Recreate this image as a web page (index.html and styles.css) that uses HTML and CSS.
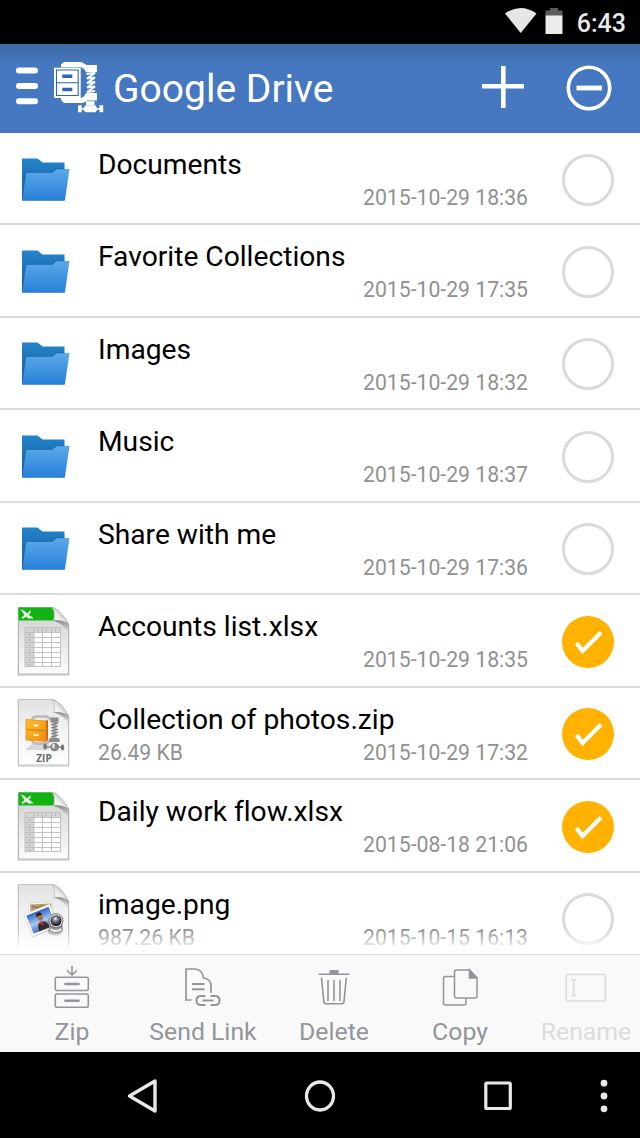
FILE: index.html
```
<!DOCTYPE html>
<html lang="en">

<head>
  <meta charset="UTF-8" />
  <meta name="viewport" content="width=device-width, initial-scale=1.0" />
  <title>Google Drive</title>
  <link rel="stylesheet" href="styles.css">
</head>

<body>
  <!-- File type icons -->
  <svg class="sprite" width="0" height="0">
    <defs>
      <linearGradient id="folderBack" x1="0" y1="0" x2="0" y2="1">
        <stop offset="0" stop-color="#2484ca" />
        <stop offset="1" stop-color="#155a9e" />
      </linearGradient>
      <linearGradient id="folderFront" x1="0" y1="0" x2="0" y2="1">
        <stop offset="0" stop-color="#5ca9e9" />
        <stop offset="1" stop-color="#2780d8" />
      </linearGradient>
      <linearGradient id="paper" x1="0" y1="0" x2="0" y2="1">
        <stop offset="0" stop-color="#e2e2e2" />
        <stop offset="0.5" stop-color="#f4f4f4" />
        <stop offset="1" stop-color="#fdfdfd" />
      </linearGradient>
      <linearGradient id="sheetPaper" x1="0" y1="0" x2="0" y2="1">
        <stop offset="0" stop-color="#cfcfcf" />
        <stop offset="0.5" stop-color="#e6e6e6" />
        <stop offset="1" stop-color="#fcfcfc" />
      </linearGradient>
      <linearGradient id="fold" x1="0" y1="1" x2="0.7" y2="0.3">
        <stop offset="0" stop-color="#ffffff" />
        <stop offset="0.6" stop-color="#f0f0f0" />
        <stop offset="1" stop-color="#bdbdbd" />
      </linearGradient>
      <linearGradient id="foldShade" x1="0" y1="0" x2="0" y2="1">
        <stop offset="0" stop-color="#777" stop-opacity="0.8" />
        <stop offset="1" stop-color="#999" stop-opacity="0" />
      </linearGradient>
      <linearGradient id="cabinet" x1="0" y1="0" x2="1" y2="1">
        <stop offset="0" stop-color="#fdc02c" />
        <stop offset="1" stop-color="#f28a12" />
      </linearGradient>
      <linearGradient id="sky" x1="0" y1="0" x2="0" y2="1">
        <stop offset="0" stop-color="#2e62c4" />
        <stop offset="0.55" stop-color="#a9c9f2" />
        <stop offset="1" stop-color="#3a6bc0" />
      </linearGradient>
      <radialGradient id="lens" cx="0.45" cy="0.35" r="0.6">
        <stop offset="0" stop-color="#ffffff" />
        <stop offset="0.3" stop-color="#8a8c9a" />
        <stop offset="1" stop-color="#15161e" />
      </radialGradient>
    </defs>

    <symbol id="folder" viewBox="0 0 56 72">
      <path d="M6 15.500h15.500l5 4H48.500v38H6z" fill="url(#folderBack)" />
      <path d="M10.500 29.500h26l4-3.500H53.500l-4.600 31.500H6z" fill="url(#folderFront)" />
      <path d="M10.300 29.300h26l4-3.500H48.500" fill="none" stroke="#1565a8" stroke-width="0.7" />
    </symbol>

    <symbol id="xlsx" viewBox="1 0 56 72">
      <path d="M2.500 3h37.500l14.500 16.500v51.500H2.500z" fill="#999" opacity="0.35" />
      <path d="M3.500 2.500h35q8 4 15 16.500v50h-50z" fill="url(#sheetPaper)" stroke="#b5b5b5" />
      <path d="M3.500 2.500h34q3 3 1 13h-35z" fill="#12b312" />
      <path d="M5.500 4.500l3.500 1 3 3 3.500-3.500v3l-2 1.500 4.500 3v1h-5l-1.500-2-4 2.500-1-1.500 3-2.500z" fill="#e9f9e9" />
      <path d="M37 2.500q3.500 3.500 2 13 9-1 14 4-6-14-16-17z" fill="url(#fold)" stroke="#bbb" stroke-width="0.5" />
      <path d="M38 15.500q9-1 15.500 3.500v9q-5-9-15.500-12.500z" fill="url(#foldShade)" />
      <path d="M19 27h26v34H19z" fill="#fff" />
      <path d="M10 22.500h35.500V27H19v34.500h-9z" fill="#d4d4d4" />
      <path d="M10 22.500h35.500v39H10zM19 22.500v39M27.500 22.500v39M36.500 22.500v39M10 27.500h35.500M10 32.500h35.500M10 37.500h35.500M10 42.500h35.500M10 47.500h35.500M10 52.500h35.500M10 57.500h35.500" fill="none" stroke="#bcbcbc" stroke-width="0.9" />
      <path d="M13 30h3M13 35h3M13 40h3M13 45h3M13 50h3M13 55h3M13 60h3M23 24v2M31.500 24v2M40.500 24v2" stroke="#a8a8a8" stroke-width="0.8" />
    </symbol>

    <symbol id="page" viewBox="0 0 56 72">
      <path d="M2.500 2.500h37l15 17V70h-52z" fill="#999" opacity="0.3" />
      <path d="M3.500 2.500h35q8 4 15 16.500v49h-50z" fill="url(#paper)" stroke="#c2c2c2" />
      <path d="M37 2.500q3.500 3.500 2 13 9-1 14.500 4-6-14-16.500-17z" fill="url(#fold)" stroke="#b0b0b0" stroke-width="0.7" />
      <path d="M39 15.500q9-1 14.500 3.500v8q-5-9-14.500-11.500z" fill="url(#foldShade)" />
    </symbol>

    <symbol id="image" viewBox="1 0 56 72">
      <use href="#page" width="56" height="72" />
      <path d="M13 21l24-1 2 16-24 5z" fill="#f8f8f8" stroke="#d0d0d0" stroke-width="0.600" />
      <path d="M15 22.500l21-1 1 8-21 4z" fill="#b5a06a" />
      <path d="M17 24l5 2 4-2.500 6 2 4-2" fill="none" stroke="#7d6c3c" stroke-width="1" />
      <g transform="rotate(-22 26 38)">
        <path d="M12 27.500h28v24H12z" fill="#999" opacity="0.4" />
        <path d="M12 26.500h28v23.500H12z" fill="#fdfdfd" stroke="#ccc" stroke-width="0.500" />
        <path d="M14 28.500h24v19.500H14z" fill="url(#sky)" />
        <path d="M20 48q0-8 5.500-8.500 6 .5 6 8.500z" fill="#3a2b33" />
        <path d="M23 40l3 4 2-4z" fill="#b8392f" />
        <ellipse cx="26" cy="35" rx="2.700" ry="3.600" fill="#a86b4c" />
        <path d="M23 34q0-4 3-4t3 4q-3-2-6 0z" fill="#2a1c18" />
      </g>
      <ellipse cx="40" cy="49" rx="7.500" ry="4.500" fill="#777" opacity="0.500" />
      <path d="M34 38q6-7 13 0l1 10q-7 7-14 0z" fill="#8c8c92" />
      <circle cx="41" cy="38.500" r="7" fill="#e4e4e8" stroke="#666" stroke-width="0.800" />
      <circle cx="41" cy="38.500" r="5.500" fill="url(#lens)" />
      <path d="M35.500 47q5 4 11 0" fill="none" stroke="#f2f2f2" stroke-width="1.800" />
    </symbol>

    <symbol id="check" viewBox="0 0 52 52">
      <path d="M14.500 27l6 8L39 16.500" fill="none" stroke="#fff" stroke-width="4.200" />
    </symbol>
  </svg>

  <div class="status-bar">
    <svg class="wifi" width="32" height="26" viewBox="0 0 32 26">
      <path d="M0 5.500q15.700-11 31.500 0L15.700 25z" fill="#e6e6e6" />
    </svg>
    <svg class="battery" width="18" height="26" viewBox="0 0 18 26">
      <path d="M5 0h8v2.500h4.500V8H.5V2.500H5z" fill="#5c5c5c" />
      <path d="M.5 7.500h17V26H.5z" fill="#ececec" />
    </svg>
    <span class="clock">6:43</span>
  </div>

  <header>
    <svg class="menu" width="22" height="38" viewBox="0 0 22 38">
      <path d="M3 3.500h16M3 19h16M3 34.300h16" stroke="#fff" stroke-width="6" stroke-linecap="round" />
    </svg>
    <svg class="logo" width="50" height="51" viewBox="0 0 50 51">
      <path d="M10 0h17.500l5 3H43v7.300H32q-2-5-6-5H7V2.500zM7 36h19q4 0 6-5h11v7.500h-9.500L29 41H10L7 38z" fill="#fff" />
      <path d="M0 5.700h26.700V36H0z" fill="#fff" />
      <path d="M2.500 8h21.700v25.500H2.500zM2.500 20.700h21.700" fill="none" stroke="#2e65ae" stroke-width="1.100" />
      <path d="M8.300 12.500h10v3.500h-10zM8.300 25.700h10v3.500h-10z" fill="#2e65ae" />
      <path d="M32.500 12l8.500-1-8 5.500 8-1-8 5.500 8-1-8 5.500 8-1-8 5.500 8-1" fill="none" stroke="#fff" stroke-width="2.100" />
      <path d="M32 39.300h8.500V43H32zM24 43.300h3.700v7H24zM45.500 43.300h3.700v7h-3.700zM31.500 43.300h10l1.200 2v3.500l-1.200 1.500h-10l-1.500-1.500v-3.500zM28 46h18v1.700H28z" fill="#fff" />
    </svg>
    <h1>Google Drive</h1>
    <svg class="add" width="42" height="42" viewBox="0 0 42 42">
      <path d="M0 20.300h42M21.300 0v42" stroke="#fff" stroke-width="4.600" />
    </svg>
    <svg class="deselect" width="46" height="46" viewBox="0 0 46 46">
      <circle cx="23" cy="23" r="20.700" fill="none" stroke="#fff" stroke-width="3.600" />
      <path d="M10.500 23h25.500" stroke="#fff" stroke-width="4.800" />
    </svg>
  </header>

  <main>
    <ul class="files">
      <li>
        <svg class="icon"><use href="#folder" /></svg>
        <div class="info">
          <h2>Documents</h2>
          <p><span></span><time>2015-10-29 18:36</time></p>
        </div>
        <span class="select"></span>
      </li>
      <li>
        <svg class="icon"><use href="#folder" /></svg>
        <div class="info">
          <h2>Favorite Collections</h2>
          <p><span></span><time>2015-10-29 17:35</time></p>
        </div>
        <span class="select"></span>
      </li>
      <li>
        <svg class="icon"><use href="#folder" /></svg>
        <div class="info">
          <h2>Images</h2>
          <p><span></span><time>2015-10-29 18:32</time></p>
        </div>
        <span class="select"></span>
      </li>
      <li>
        <svg class="icon"><use href="#folder" /></svg>
        <div class="info">
          <h2>Music</h2>
          <p><span></span><time>2015-10-29 18:37</time></p>
        </div>
        <span class="select"></span>
      </li>
      <li>
        <svg class="icon"><use href="#folder" /></svg>
        <div class="info">
          <h2>Share with me</h2>
          <p><span></span><time>2015-10-29 17:36</time></p>
        </div>
        <span class="select"></span>
      </li>
      <li>
        <svg class="icon"><use href="#xlsx" /></svg>
        <div class="info">
          <h2>Accounts list.xlsx</h2>
          <p><span></span><time>2015-10-29 18:35</time></p>
        </div>
        <span class="select selected"><svg><use href="#check" /></svg></span>
      </li>
      <li>
        <svg class="icon" viewBox="1 0 56 72">
          <use href="#page" width="56" height="72" />
          <path d="M10 53l8-7h16v7z" fill="#ccc" opacity="0.7" />
          <path d="M17 23q1-3.500 5-3.500h10q2 2.500 6 2.500M17 43q1 3.500 5 3.500h9q3-3 7-3" fill="none" stroke="#b9b9b9" stroke-width="2.600" />
          <path d="M11 22.500l20 1.500v20.500l-20-1.500z" fill="url(#cabinet)" stroke="#e39112" stroke-width="0.8" />
          <path d="M31 24l2-1.500v20.500l-2 1.500z" fill="#c96e10" />
          <path d="M11.500 32.500l19 1.300" stroke="#cf7a12" stroke-width="1.100" />
          <path d="M18.500 27.500h5v2h-5zM18.500 37h5v2h-5z" fill="#fff3c4" />
          <path d="M39.500 25v17" stroke="#aaa" stroke-width="4" />
          <path d="M36 28l7-2M36 31l7-2M36 34l7-2M36 37l7-2M36 40l7-2" stroke="#777" stroke-width="1.200" />
          <path d="M35.500 20.500h8v5h-8zM34.500 41h9.500l1 4h-11z" fill="#8b8b8b" />
          <path d="M30 50h18" stroke="#888" stroke-width="1.500" />
          <ellipse cx="39.500" cy="50" rx="4.500" ry="4.200" fill="#858585" />
          <ellipse cx="38.500" cy="49" rx="1.500" ry="2.500" fill="#dedede" />
          <ellipse cx="30" cy="49.500" rx="1.700" ry="3" fill="#777" />
          <ellipse cx="47.500" cy="50.500" rx="1.700" ry="3" fill="#777" />
          <text class="zip-label" x="29" y="64.500" text-anchor="middle">ZIP</text>
        </svg>
        <div class="info">
          <h2>Collection of photos.zip</h2>
          <p><span>26.49 KB</span><time>2015-10-29 17:32</time></p>
        </div>
        <span class="select selected"><svg><use href="#check" /></svg></span>
      </li>
      <li>
        <svg class="icon"><use href="#xlsx" /></svg>
        <div class="info">
          <h2>Daily work flow.xlsx</h2>
          <p><span></span><time>2015-08-18 21:06</time></p>
        </div>
        <span class="select selected"><svg><use href="#check" /></svg></span>
      </li>
      <li>
        <svg class="icon"><use href="#image" /></svg>
        <div class="info">
          <h2>image.png</h2>
          <p><span>987.26 KB</span><time>2015-10-15 16:13</time></p>
        </div>
        <span class="select"></span>
      </li>
    </ul>
  </main>

  <div class="toolbar">
    <button>
      <svg width="36" height="44" viewBox="0 0 36 44">
        <g fill="none" stroke="#92959c" stroke-width="1.600">
          <path d="M18 0v8.500M13 4.500l5 4.500 5-4.500" />
          <rect x="1.300" y="11.300" width="33" height="13.200" rx="1.500" />
          <rect x="1.300" y="28" width="33" height="13.200" rx="1.500" />
          <path d="M11.500 18h13M11.500 34.700h13" stroke-width="2.600" stroke-linecap="round" />
        </g>
      </svg>
      Zip
    </button>
    <button>
      <svg width="36" height="44" viewBox="0 0 36 44">
        <g fill="none" stroke="#92959c" stroke-width="1.700">
          <path d="M6.500 34H1V3h9.500q7 1 8 9 7.500 1 7.500 8v7" />
          <path d="M7 18h12.500M7 23.300h12.500" stroke-width="2" />
          <path d="M20.500 30h-4.500q-4.500 0-4.500 4.500t4.500 4.500h4.500M25.500 30h4.500q4.500 0 4.500 4.500t-4.500 4.500h-4.500M17.500 34.500h11" stroke-width="2" />
        </g>
      </svg>
      Send Link
    </button>
    <button>
      <svg width="32" height="44" viewBox="0 0 32 44">
        <path d="M11.500 4h9v4h-9z" fill="#92959c" />
        <g fill="none" stroke="#92959c" stroke-width="1.600">
          <path d="M.7 8.300h30.600M3.500 11.700l2.300 24q.2 2 2 2h16.200q1.800 0 2-2l2.300-24M10 14v21M16 14v21M22 14v21" />
        </g>
      </svg>
      Delete
    </button>
    <button>
      <svg width="36" height="44" viewBox="0 0 36 44">
        <g fill="none" stroke="#92959c" stroke-width="1.500">
          <path d="M12.500 10.500h-9q-2 0-2 2V37q0 2 2 2H22q2 0 2-2v-4.500" />
          <path d="M14.500 4h13l7.500 8v18q0 2-2 2H14.500q-2 0-2-2V6q0-2 2-2z" />
          <path d="M27.500 4v8h7.500z" fill="#92959c" />
        </g>
      </svg>
      Copy
    </button>
    <button disabled>
      <svg width="42" height="44" viewBox="0 0 42 44">
        <g fill="none" stroke="#dcdcdc" stroke-width="1.700">
          <rect x="1.300" y="8.500" width="39" height="26.500" rx="1.500" />
          <path d="M6 14h5.500M6 29.500h5.500M8.750 14v15.500" />
        </g>
      </svg>
      Rename
    </button>
  </div>

  <nav>
    <svg class="back" width="32" height="36" viewBox="0 0 32 36">
      <path d="M2.500 18L28 3v30z" fill="none" stroke="#e8e8e8" stroke-width="3.400" stroke-linejoin="round" />
    </svg>
    <svg class="home" width="32" height="34" viewBox="0 0 32 34">
      <ellipse cx="16" cy="17" rx="13.500" ry="14" fill="none" stroke="#e8e8e8" stroke-width="3.300" />
    </svg>
    <svg class="recent" width="28" height="30" viewBox="0 0 28 30">
      <rect x="1.800" y="2" width="24.500" height="25.500" rx="1" fill="none" stroke="#e8e8e8" stroke-width="3.200" />
    </svg>
    <svg class="more" width="8" height="34" viewBox="0 0 8 34">
      <path d="M4 4.200v.01M4 17v.01M4 29.800v.01" stroke="#e8e8e8" stroke-width="6.800" stroke-linecap="round" />
    </svg>
  </nav>
</body>

</html>
```
FILE: styles.css
```
:root {
  --color-header: #4578c0;
  --color-check: #ffb300;
  --color-line: #dadada;
  --color-meta: #919191;
  --color-tool: #92959c;
}

* {
  box-sizing: border-box;
}

body {
  margin: 0;
  width: 640px;
  height: 1138px;
  display: flex;
  flex-direction: column;
  overflow: hidden;
  font-family: Roboto, sans-serif;
  background-color: white;
  color: black;
}

svg {
  display: block;
  flex: none;
}

.sprite {
  position: absolute;
}

.status-bar {
  flex: none;
  height: 44px;
  display: flex;
  justify-content: flex-end;
  padding: 9px 14px 0 0;
  background: black;
}

.wifi {
  margin-top: -1px;
}

.battery {
  margin: -1px 14px 0 8px;
}

.clock {
  color: #e8e8e8;
  font-size: 25px;
  font-weight: 500;
  line-height: 30px;
}

header {
  flex: none;
  height: 89px;
  display: flex;
  padding-left: 16px;
  background: linear-gradient(#3e6aa8, var(--color-header) 22px);
}

header h1 {
  margin: 22px 0 0 9px;
  width: 369px;
  color: white;
  font-size: 39px;
  font-weight: 400;
  line-height: 46px;
}

.menu {
  margin-top: 23px;
}

.logo {
  margin: 18px 0 0 16px;
}

.add {
  margin-top: 22px;
}

.deselect {
  margin: 20.5px 0 0 42px;
}

main {
  flex: 1;
  min-height: 0;
  overflow: hidden;
  position: relative;
}

/* rows fade out just above the toolbar */
main::after {
  content: "";
  position: absolute;
  left: 0;
  right: 0;
  bottom: 0;
  height: 24px;
  background: linear-gradient(rgba(255, 255, 255, 0), white 85%);
}

.files {
  margin: 0;
  padding: 0;
  list-style: none;
}

.files li {
  height: 92.45px;
  display: flex;
  padding-left: 16px;
  border-bottom: 2px solid var(--color-line);
}

.icon {
  width: 56px;
  height: 72px;
  margin-top: 9.5px;
}

.info {
  width: 430px;
  margin-left: 26px;
  padding-top: 15px;
}

.info h2 {
  margin: 0;
  font-size: 28.2px;
  font-weight: 400;
  font-variant-ligatures: none;
  line-height: 33px;
}

.info p {
  display: flex;
  justify-content: space-between;
  margin: 4px 0 0;
  color: var(--color-meta);
  font-size: 21.2px;
  line-height: 26px;
}

.select {
  width: 52px;
  height: 52px;
  margin: 20.5px 0 0 34.3px;
  border: 3.5px solid #dadada;
  border-radius: 50%;
}

.selected {
  border: none;
  background: var(--color-check);
}

.select svg {
  width: 52px;
  height: 52px;
}

.zip-label {
  font-family: "Open Sans", sans-serif;
  font-size: 10px;
  font-weight: 700;
  fill: #666;
}

.toolbar {
  flex: none;
  height: 98px;
  display: grid;
  grid-template-columns: 108px 154px 108px 144px 108px;
  padding-left: 18px;
  border-top: 1px solid var(--color-line);
  background: #f9f9f9;
}

.toolbar button {
  display: flex;
  flex-direction: column;
  align-items: center;
  gap: 7px;
  padding: 11px 0 0;
  border: none;
  background: none;
  color: var(--color-tool);
  font-family: inherit;
  font-size: 24.8px;
  line-height: 30px;
}

.toolbar button:disabled {
  color: #dcdcdc;
}

nav {
  flex: none;
  height: 86px;
  display: flex;
  align-items: center;
  padding: 1px 0 0 127px;
  background: black;
}

.home {
  margin-left: 145px;
}

.recent {
  margin-left: 147.5px;
}

.more {
  margin-left: 88.500px;
}
```
